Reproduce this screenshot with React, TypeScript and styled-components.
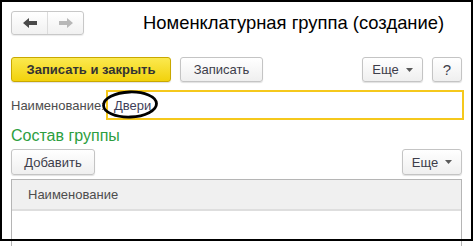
import React from "react";
import styled, { createGlobalStyle } from "styled-components";

const GlobalStyle = createGlobalStyle`
  html, body {
    margin: 0;
    padding: 0;
    background: #fff;
  }
`;

const Page = styled.div`
  position: relative;
  width: 475px;
  height: 246px;
  overflow: hidden;
  background: #fff;
  font-family: "Liberation Sans", Arial, sans-serif;
  color: #4d4d4d;
`;

// black frame drawn over the screenshot
const Frame = styled.div`
  position: absolute;
  left: 0;
  top: 0;
  width: 473px;
  height: 241px;
  box-sizing: border-box;
  border: 2px solid #000;
  pointer-events: none;
  z-index: 2;
`;

const Content = styled.div`
  display: flex;
  flex-direction: column;
  padding: 11px 13px 0 11px;
  height: 100%;
  box-sizing: border-box;
`;

const Header = styled.div`
  display: flex;
  align-items: center;
  height: 24px;
`;

const NavGroup = styled.div`
  display: flex;
  width: 73px;
  height: 24px;
  box-sizing: border-box;
  border: 1px solid #c8c8c8;
  border-radius: 3px;
  background: linear-gradient(#ffffff, #f1f1f1);
  box-shadow: 0 1px 1px rgba(0, 0, 0, 0.08);
`;

const NavButton = styled.div<{ $divider?: boolean }>`
  flex: 1;
  display: flex;
  align-items: center;
  justify-content: center;
  border-left: ${(p) => (p.$divider ? "1px solid #dcdcdc" : "none")};
`;

const Title = styled.div`
  margin-left: 59px;
  font-size: 18.4px;
  color: #000;
  white-space: nowrap;
`;

const Toolbar = styled.div<{ $top: number }>`
  display: flex;
  align-items: center;
  gap: 9px;
  margin-top: ${(p) => p.$top}px;
`;

const Spacer = styled.div`
  flex: 1;
`;

const Button = styled.div<{ $width: number; $height?: number; $primary?: boolean; $size?: number }>`
  display: flex;
  align-items: center;
  justify-content: center;
  gap: 7px;
  width: ${(p) => p.$width}px;
  height: ${(p) => p.$height ?? 25}px;
  box-sizing: border-box;
  border-radius: 3px;
  font-size: ${(p) => p.$size ?? 13}px;
  font-weight: ${(p) => (p.$primary ? "bold" : "normal")};
  white-space: nowrap;
  color: ${(p) => (p.$primary ? "#333" : "#3d3d4a")};
  border: 1px solid ${(p) => (p.$primary ? "#c9a800" : "#c4c4c4")};
  background: ${(p) =>
    p.$primary
      ? "linear-gradient(#fbe94f, #f2d20c)"
      : "linear-gradient(#ffffff, #efefef)"};
  box-shadow: 0 1px 1px rgba(0, 0, 0, 0.12);
`;

const FieldRow = styled.div`
  display: flex;
  align-items: center;
  margin-top: 8px;
  height: 30px;
  position: relative;
`;

const Label = styled.div`
  width: 95px;
  font-size: 13px;
  color: #4d4d4d;
  white-space: nowrap;
`;

const Input = styled.div`
  flex: 1;
  height: 30px;
  margin-right: -2px;
  box-sizing: border-box;
  border: 2px solid #f5c81c;
  display: flex;
  align-items: center;
  padding-left: 6px;
  font-size: 13px;
  color: #3f3f5a;
`;

const Ellipse = styled.svg`
  position: absolute;
  left: 91px;
  top: 1px;
  overflow: visible;
`;

const GroupTitle = styled.div`
  margin-top: 6px;
  font-size: 16px;
  color: #2c9e40;
  line-height: 20px;
`;

const Table = styled.div`
  margin-top: 4px;
  flex: 1;
  border: 1px solid #b5b5b5;
  border-bottom: none;
  display: flex;
  flex-direction: column;
`;

const TableHead = styled.div`
  height: 29px;
  background: #f0f0f0;
  border-bottom: 2px solid #dedede;
  display: flex;
  align-items: center;
  padding-left: 16px;
  font-size: 13px;
  color: #4d4d4d;
`;

const Caret = () => (
  <svg width="7" height="4" viewBox="0 0 7 4">
    <path d="M0 0h7L3.5 4z" fill="#5a5a5a" />
  </svg>
);

const ArrowLeft = () => (
  <svg width="14" height="10" viewBox="0 0 14 10">
    <path d="M0 5L6 0v3h8v4H6v3z" fill="#4a4a4a" />
  </svg>
);

const ArrowRight = () => (
  <svg width="14" height="10" viewBox="0 0 14 10">
    <path d="M14 5L8 0v3H0v4h8v3z" fill="#b8b8b8" />
  </svg>
);

export default function App() {
  return (
    <Page>
      <GlobalStyle />
      <Frame />
      <Content>
        <Header>
          <NavGroup>
            <NavButton>
              <ArrowLeft />
            </NavButton>
            <NavButton $divider>
              <ArrowRight />
            </NavButton>
          </NavGroup>
          <Title>Номенклатурная группа (создание)</Title>
        </Header>

        <Toolbar $top={22}>
          <Button $width={160} $primary>
            Записать и закрыть
          </Button>
          <Button $width={83}>Записать</Button>
          <Spacer />
          <Button $width={61}>
            Еще <Caret />
          </Button>
          <Button $width={30} $size={15}>
            ?
          </Button>
        </Toolbar>

        <FieldRow>
          <Label>Наименование:</Label>
          <Input>Двери</Input>
          <Ellipse width="56" height="27">
            <ellipse
              cx="28"
              cy="13.5"
              rx="26.5"
              ry="12.5"
              fill="none"
              stroke="#000"
              strokeWidth="2.8"
              transform="rotate(-2 28 13.5)"
            />
          </Ellipse>
        </FieldRow>

        <GroupTitle>Состав группы</GroupTitle>

        <Toolbar $top={3}>
          <Button $width={84} $height={26}>
            Добавить
          </Button>
          <Spacer />
          <Button $width={60} $height={26}>
            Еще <Caret />
          </Button>
        </Toolbar>

        <Table>
          <TableHead>Наименование</TableHead>
        </Table>
      </Content>
    </Page>
  );
}
